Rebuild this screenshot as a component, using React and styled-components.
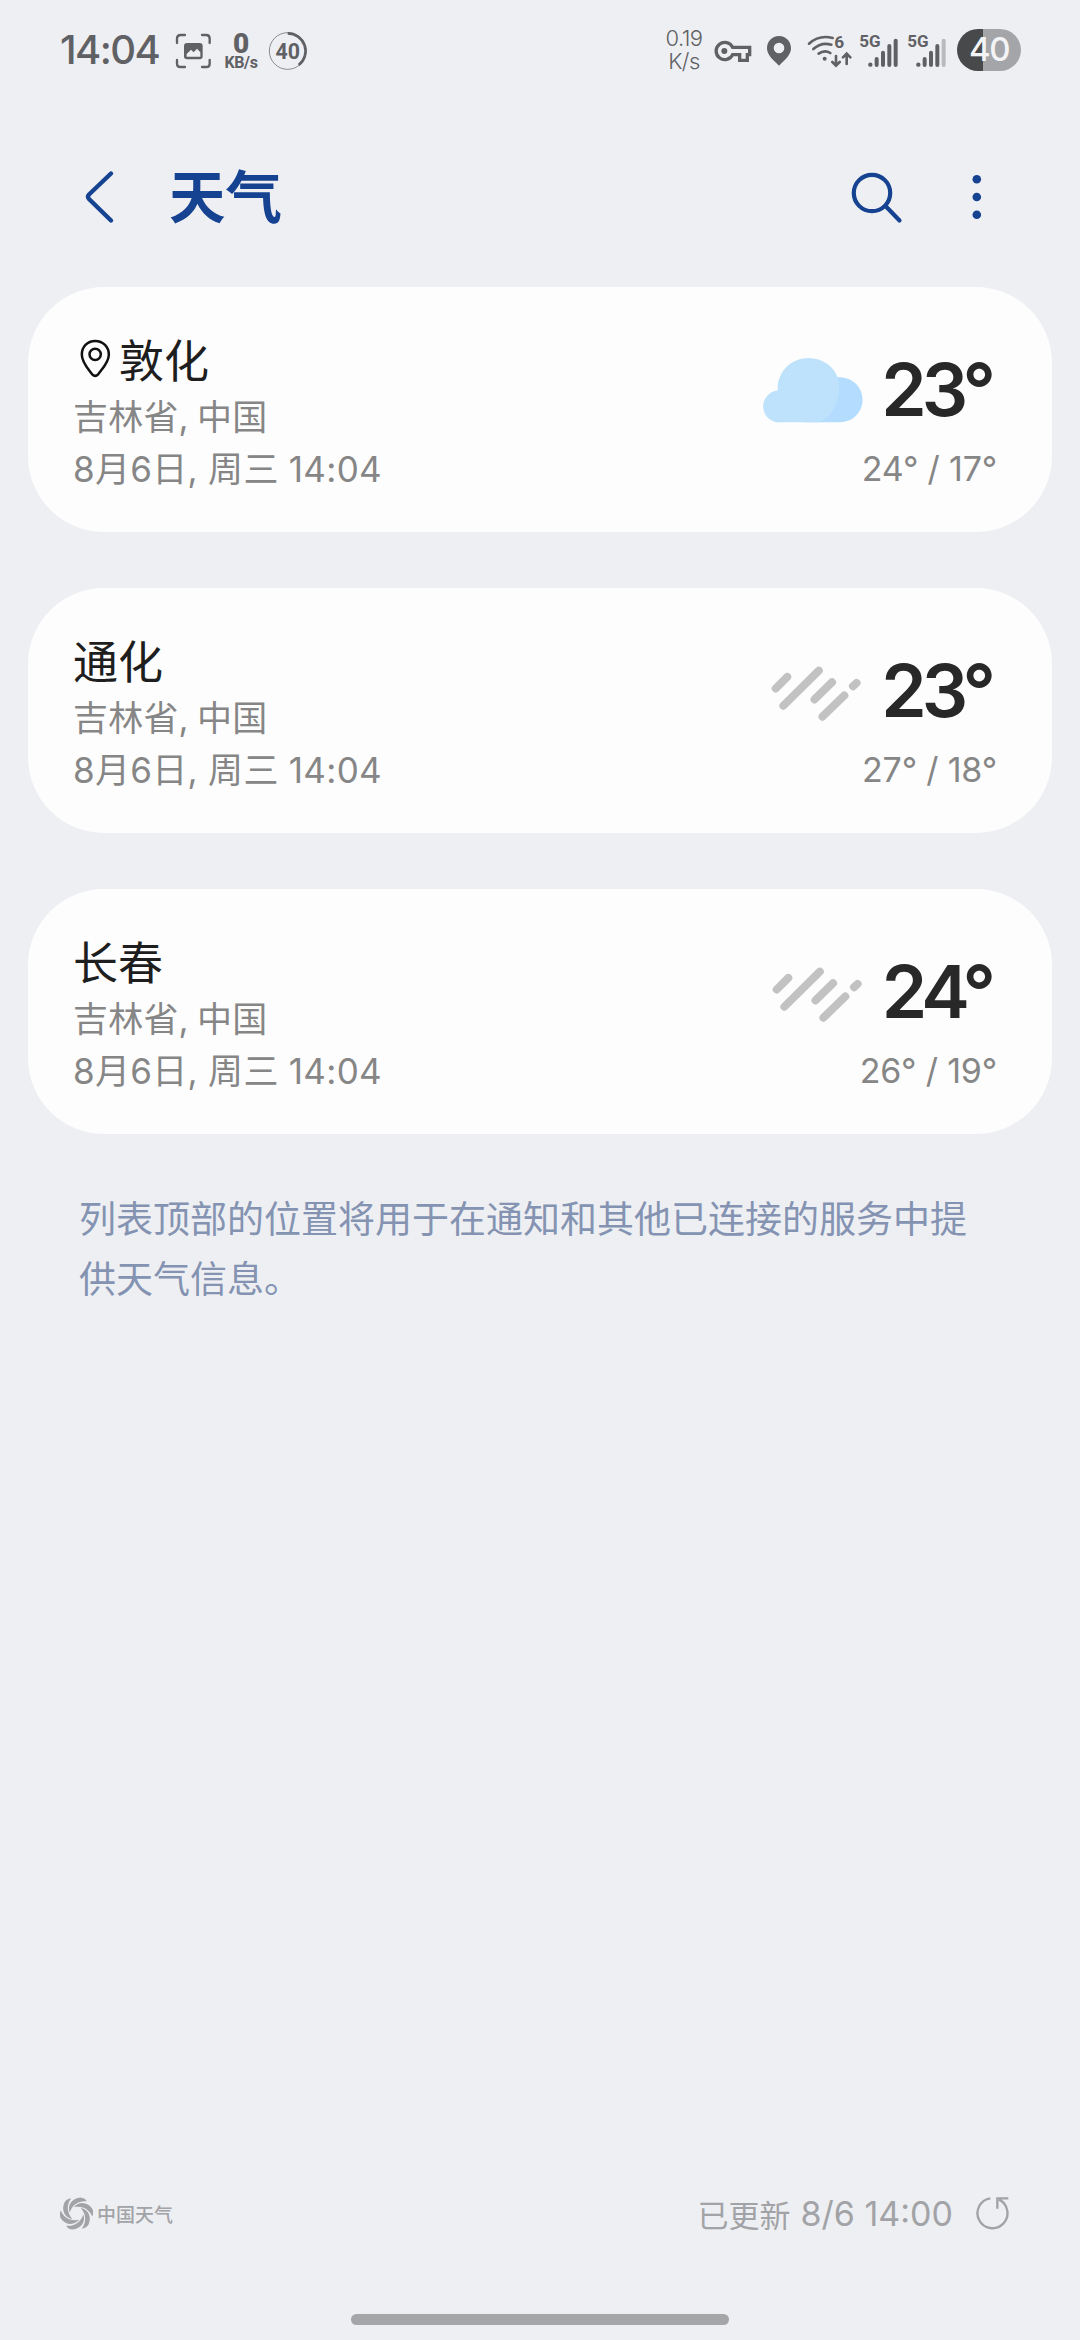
import React from "react";
import styled, { createGlobalStyle } from "styled-components";

const GlobalStyle = createGlobalStyle`
  * {
    box-sizing: border-box;
  }
  body {
    margin: 0;
    background: #eeeff3;
    font-family: Inter, "Noto Sans CJK SC", sans-serif;
  }
  svg {
    display: block;
    flex-shrink: 0;
  }
`;

const Screen = styled.div`
  width: 1080px;
  height: 2340px;
  display: flex;
  flex-direction: column;
  overflow: hidden;
`;

const StatusBar = styled.div`
  height: 100px;
  padding: 0 59px 0 60px;
  display: flex;
  align-items: center;
  justify-content: space-between;
  color: #606164;
`;
const StatusGroup = styled.div`
  display: flex;
  align-items: center;
`;
const Clock = styled.span`
  width: 115px;
  font-size: 40px;
  font-weight: 500;
  line-height: 60px;
  letter-spacing: -1.6px;
`;
const StatusIcon = styled.svg`
  height: 60px;
  width: ${(props) => props.$width}px;
  margin-left: ${(props) => props.$gap || 0}px;
`;
const NetSpeed = styled.div`
  width: 36px;
  margin-left: 11px;
  display: flex;
  flex-direction: column;
  align-items: center;
  font-family: Roboto, sans-serif;
  font-weight: 700;
  font-size: 16px;
  line-height: 16px;
  letter-spacing: -0.4px;
  padding-top: 3px;

  strong {
    font-size: 28px;
    line-height: 22px;
  }
`;
const Rate = styled.div`
  width: 40px;
  margin-right: 9px;
  text-align: center;
  font-size: 22px;
  font-weight: 300;
  line-height: 23px;
  letter-spacing: -0.5px;
`;
const Battery = styled.div`
  width: 64px;
  height: 42px;
  margin-left: 10px;
  border-radius: 21px;
  background: linear-gradient(to right, #48494b 40%, #a4a5a8 40%);
  color: #f4f4f6;
  font-size: 33px;
  font-weight: 500;
  line-height: 41px;
  letter-spacing: -1.5px;
  text-align: center;
`;

const Header = styled.header`
  height: 187px;
  padding: 7px 80px 0 82px;
  display: flex;
  align-items: center;
  color: #154291;
`;
const Title = styled.h1`
  flex: 1;
  margin: 0 0 0 53px;
  padding-top: 2px;
  font-size: 56.5px;
  font-weight: 700;
  line-height: 80px;
`;
const HeaderIcon = styled.svg`
  width: ${(props) => props.$width}px;
  height: 60px;
  margin-left: ${(props) => props.$gap || 0}px;
  fill: none;
  stroke: currentColor;
  stroke-linecap: round;
  stroke-linejoin: round;
`;

const CardList = styled.main`
  flex: 1;
  padding: 0 28px;
  display: flex;
  flex-direction: column;
  gap: 56px;
`;
const Card = styled.section`
  height: 245px;
  padding: 41px 55px 0 45px;
  display: flex;
  justify-content: space-between;
  border-radius: 76px;
  background: #fdfdfd;
`;
const City = styled.h2`
  height: 61px;
  margin: 0 0 2px;
  display: flex;
  align-items: center;
  font-size: 45px;
  font-weight: 400;
  color: #1e1e1e;
`;
const PinIcon = styled.svg`
  width: 33px;
  height: 40px;
  margin: 0 7px 2px 6px;
`;
const Line = styled.p`
  margin: 0;
  font-size: 35px;
  font-weight: 400;
  line-height: 52px;
  letter-spacing: 0.2px;
  word-spacing: -2px;
  color: #868686;
`;
const DateLine = styled(Line)`
  letter-spacing: 0.3px;
  word-spacing: 0;
`;
const Reading = styled.div`
  display: flex;
  flex-direction: column;
  align-items: flex-end;
`;
const Current = styled.div`
  height: 115px;
  padding: 9px 6px 0 0;
  display: flex;
  align-items: center;
`;
const WeatherIcon = styled.svg`
  width: 102px;
  height: 68px;
  margin: 0 16px 0 0;
`;
const Degrees = styled.span`
  font-size: 73px;
  font-weight: 600;
  line-height: 80px;
  letter-spacing: -5px;
  color: #282828;
`;
const Range = styled(Line)`
  font-size: 34px;
  letter-spacing: -0.2px;
  word-spacing: 0;
`;
const Note = styled.p`
  margin: 0 51px 0;
  font-size: 37px;
  line-height: 60px;
  color: #8493b1;
`;

const Footer = styled.footer`
  height: 68px;
  margin-bottom: 67px;
  padding: 0 69px 0 60px;
  display: flex;
  align-items: center;
  justify-content: space-between;
  color: #a2a3a6;
`;
const Brand = styled.div`
  display: flex;
  align-items: center;
  gap: 4px;
  font-size: 19px;
  font-weight: 500;
`;
const Updated = styled.div`
  display: flex;
  align-items: center;
  font-size: 31px;
`;
const Stamp = styled.span`
  margin: 0 22px 0 10px;
  font-size: 34px;
`;
const NavHandle = styled.div`
  width: 378px;
  height: 11px;
  margin: 0 auto 15px;
  border-radius: 6px;
  background: #a5a6a8;
`;

const cities = [
  { name: "敦化", icon: "cloud", now: 23, high: 24, low: 17, here: true },
  { name: "通化", icon: "rain", now: 23, high: 27, low: 18 },
  { name: "长春", icon: "rain", now: 24, high: 26, low: 19 },
];

function Cloud() {
  return (
    <WeatherIcon viewBox="65 225 305 205">
      <path d="M190 425H296A68 68 0 0 0 296 289H250Z" fill="#b3dcfe" />
      <path
        d="M117 425A48 48 0 0 1 108 329C106 270 150 231 201 231C245 231 278 258 289 290C303 345 280 405 233 425Z"
        fill="#bee2fb"
      />
    </WeatherIcon>
  );
}

function Rain() {
  return (
    <WeatherIcon
      viewBox="65 168 305 205"
      stroke="#c2c2c2"
      strokeWidth="24"
      strokeLinecap="round"
    >
      <path d="M102 263L137 228M125 315L232 209M219 296L272 244M243 348L309 284M335 256L346 246" />
    </WeatherIcon>
  );
}

function Signal({ weak, gap }) {
  return (
    <StatusIcon $width={40} $gap={gap} viewBox="627 30 120 180">
      <text x="628" y="112" fontSize="51" fontWeight="700" fontFamily="Roboto" fill="#606164">
        5G
      </text>
      <circle cx="661" cy="164" r="6.5" fill="#606164" />
      <g stroke="#606164" strokeWidth="12" strokeLinecap="round">
        <path d="M680 147V165M699 128V165M718 108V165" />
        <path d="M737 92V165" stroke={weak ? "#b9babd" : "#606164"} />
      </g>
    </StatusIcon>
  );
}

function CityCard({ city }) {
  return (
    <Card>
      <div>
        <City>
          {city.here && (
            <PinIcon viewBox="178 175 98 120" fill="none" stroke="#111" strokeWidth="7.5">
              <circle cx="226" cy="224" r="17" />
              <path
                d="M226 184C202 184 186 202 186 225C186 248 204 266 217 284Q226 293 235 284C248 266 267 248 267 225C267 202 250 184 226 184Z"
              />
            </PinIcon>
          )}
          {city.name}
        </City>
        <Line>吉林省, 中国</Line>
        <DateLine>8月6日, 周三 14:04</DateLine>
      </div>
      <Reading>
        <Current>
          {city.icon === "cloud" ? <Cloud /> : <Rain />}
          <Degrees>{city.now}°</Degrees>
        </Current>
        <Range>
          {city.high}° / {city.low}°
        </Range>
      </Reading>
    </Card>
  );
}

function App() {
  return (
    <Screen>
      <GlobalStyle />
      <StatusBar>
        <StatusGroup>
          <Clock>14:04</Clock>
          <StatusIcon $width={37} viewBox="405 30 111 180">
            <path
              d="M411 99V86Q411 75 422 75H435M486 75H499Q509 75 509 86V99M509 150V161Q509 171 499 171H486M435 171H422Q411 171 411 161V150"
              fill="none"
              stroke="#606164"
              strokeWidth="7"
              strokeLinecap="round"
            />
            <rect x="432" y="99" width="56" height="49" rx="9" fill="#606164" />
            <path d="M440 140V132L453 119L461 127L471 116L481 127V140Z" fill="#eeeff3" />
          </StatusIcon>
          <NetSpeed>
            <strong>0</strong>
            KB/s
          </NetSpeed>
          <StatusIcon $width={40} $gap={9} viewBox="684 30 120 180">
            <circle cx="743" cy="123" r="55" fill="none" stroke="#8b8c8f" strokeWidth="3" />
            <path d="M743 70A53 53 0 0 1 776 165" fill="none" stroke="#606164" strokeWidth="8" />
            <text
              x="743"
              y="147"
              textAnchor="middle"
              fontFamily="Roboto"
              fontSize="64"
              fontWeight="700"
              fill="#606164"
            >
              40
            </text>
          </StatusIcon>
        </StatusGroup>
        <StatusGroup>
          <Rate>
            0.19
            <br />
            K/s
          </Rate>
          <StatusIcon $width={40} viewBox="190 30 120 180">
            <path
              d="M249 112H300V134H293V151H270V134H249A26 26 0 1 1 249 112Z"
              fill="none"
              stroke="#606164"
              strokeWidth="10"
            />
            <circle cx="224" cy="123" r="9" fill="#606164" />
          </StatusIcon>
          <StatusIcon $width={28} $gap={12} viewBox="345 30 84 180">
            <path
              d="M387 78C365 78 351 95 351 115C351 136 370 150 387 167C404 150 423 136 423 115C423 95 409 78 387 78ZM387 98A16 16 0 1 1 387 130A16 16 0 1 1 387 98Z"
              fill="#606164"
              fillRule="evenodd"
            />
          </StatusIcon>
          <StatusIcon $width={46} $gap={13} viewBox="468 30 138 180">
            <g fill="none" stroke="#606164" strokeWidth="8" strokeLinecap="round">
              <path d="M477 101Q508 73 548 84M490 117Q514 95 544 104M506 131Q524 118 541 129" />
              <path d="M558 138V166M547 156L558 167L569 156M590 162V133M579 142L590 131L601 142" />
            </g>
            <circle cx="524" cy="146" r="6" fill="#606164" />
            <text x="553" y="115" fontSize="52" fontWeight="700" fontFamily="Roboto" fill="#606164">
              6
            </text>
          </StatusIcon>
          <Signal gap={7} />
          <Signal gap={8} weak />
          <Battery>40</Battery>
        </StatusGroup>
      </StatusBar>

      <Header>
        <HeaderIcon $width={34} viewBox="82 167 34 60" strokeWidth="4.4">
          <path d="M111 173.5L89 194.5Q87 196.8 89 199L111 220.5" />
        </HeaderIcon>
        <Title>天气</Title>
        <HeaderIcon $width={56} viewBox="848 167 56 60" strokeWidth="4.2">
          <circle cx="872" cy="193" r="18.2" />
          <path d="M885.5 206L899.5 220.5" />
        </HeaderIcon>
        <HeaderIcon $width={46} $gap={50} viewBox="954 167 46 60">
          <g fill="currentColor" stroke="none">
            <circle cx="976.8" cy="179.3" r="4.3" />
            <circle cx="976.8" cy="197" r="4.3" />
            <circle cx="976.8" cy="214.7" r="4.3" />
          </g>
        </HeaderIcon>
      </Header>

      <CardList>
        {cities.map((city) => (
          <CityCard key={city.name} city={city} />
        ))}
        <Note>列表顶部的位置将用于在通知和其他已连接的服务中提供天气信息。</Note>
      </CardList>

      <Footer>
        <Brand>
          <svg width="33" height="33" viewBox="-17 -17 34 34" fill="currentColor">
            {[0, 60, 120, 180, 240, 300].map((angle) => (
              <path
                key={angle}
                transform={`rotate(${angle})`}
                d="M-7 -1C-10 -9 -4 -16 4 -16.500Q9 -16 10.500 -12.500C3.500 -13.500 -4 -10 -7 -1Z"
              />
            ))}
          </svg>
          中国天气
        </Brand>
        <Updated>
          已更新
          <Stamp>8/6 14:00</Stamp>
          <svg width="36" height="36" viewBox="912 76 108 108" fill="none" stroke="currentColor" strokeWidth="7">
            <path d="M958 86A45 45 0 1 0 984 90M1012 86H979V117" />
          </svg>
        </Updated>
      </Footer>
      <NavHandle />
    </Screen>
  );
}

export default App;
